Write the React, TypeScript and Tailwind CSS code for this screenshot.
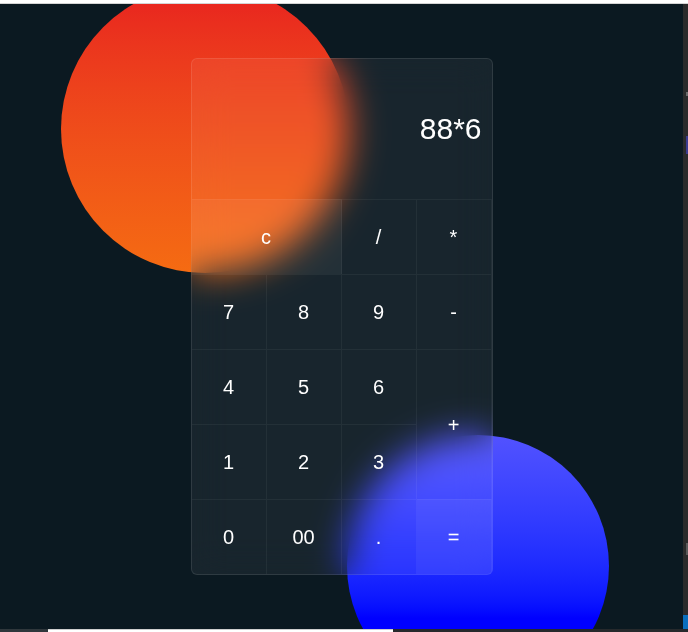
const keys: { label: string; cls?: string }[] = [
  { label: 'c', cls: 'col-span-2 bg-white/[0.05]' },
  { label: '/' },
  { label: '*' },
  { label: '7' },
  { label: '8' },
  { label: '9' },
  { label: '-' },
  { label: '4' },
  { label: '5' },
  { label: '6' },
  { label: '+', cls: 'row-span-2' },
  { label: '1' },
  { label: '2' },
  { label: '3' },
  { label: '0' },
  { label: '00' },
  { label: '.' },
  { label: '=', cls: 'bg-white/[0.05]' },
]

export default function App() {
  return (
    <div
      className="w-[688px] h-[632px] flex flex-col overflow-hidden bg-[#0b1921]"
      style={{ fontFamily: '"Liberation Sans", Arial, sans-serif' }}
    >
      {/* top window edge */}
      <div className="h-[4px] bg-white border-b border-[#d4d4d4] shrink-0" />

      <div className="flex-1 flex min-h-0">
        {/* stage */}
        <div className="relative flex-1 flex items-center justify-center overflow-hidden">
          <div className="absolute left-[61px] top-[-19px] w-[288px] h-[288px] rounded-full bg-linear-to-b from-[#e81f1f] to-[#f56b12]" />
          <div className="absolute left-[347px] top-[431px] w-[262px] h-[262px] rounded-full bg-linear-to-b from-[#5252ff] to-[#0000ff] to-70%" />

          {/* calculator */}
          <div className="relative w-[302px] rounded-md border border-white/10 bg-white/[0.055] backdrop-blur-[18px] overflow-hidden text-white">
            <div className="h-[140px] flex items-center justify-end pr-[10px] text-[30px] leading-none">
              88*6
            </div>
            <div className="grid grid-cols-4 auto-rows-[75px]">
              {keys.map((k) => (
                <button
                  key={k.label}
                  className={`flex items-center justify-center border-t border-r border-white/5 text-[20px] ${k.cls ?? ''}`}
                >
                  {k.label}
                </button>
              ))}
            </div>
          </div>
        </div>

        {/* editor edge on the right */}
        <div className="w-[5px] bg-[#2b2b2b] flex flex-col shrink-0">
          <div className="h-[88px]" />
          <div className="h-[4px] ml-[3px] bg-[#6a6a6a]" />
          <div className="h-[40px]" />
          <div className="h-[18px] ml-[3px] bg-[#3c3c8f]" />
          <div className="flex-1" />
          <div className="h-[12px] ml-[3px] bg-[#5a5a5a]" />
          <div className="h-[60px]" />
          <div className="h-[14px] bg-[#0a6ebd]" />
        </div>
      </div>

      {/* bottom taskbar edge */}
      <div className="h-[3px] flex shrink-0 bg-[#26292c]">
        <div className="w-[48px] bg-[#2f373c]" />
        <div className="w-[345px] bg-white border-t border-[#cfcfcf]" />
      </div>
    </div>
  )
}
